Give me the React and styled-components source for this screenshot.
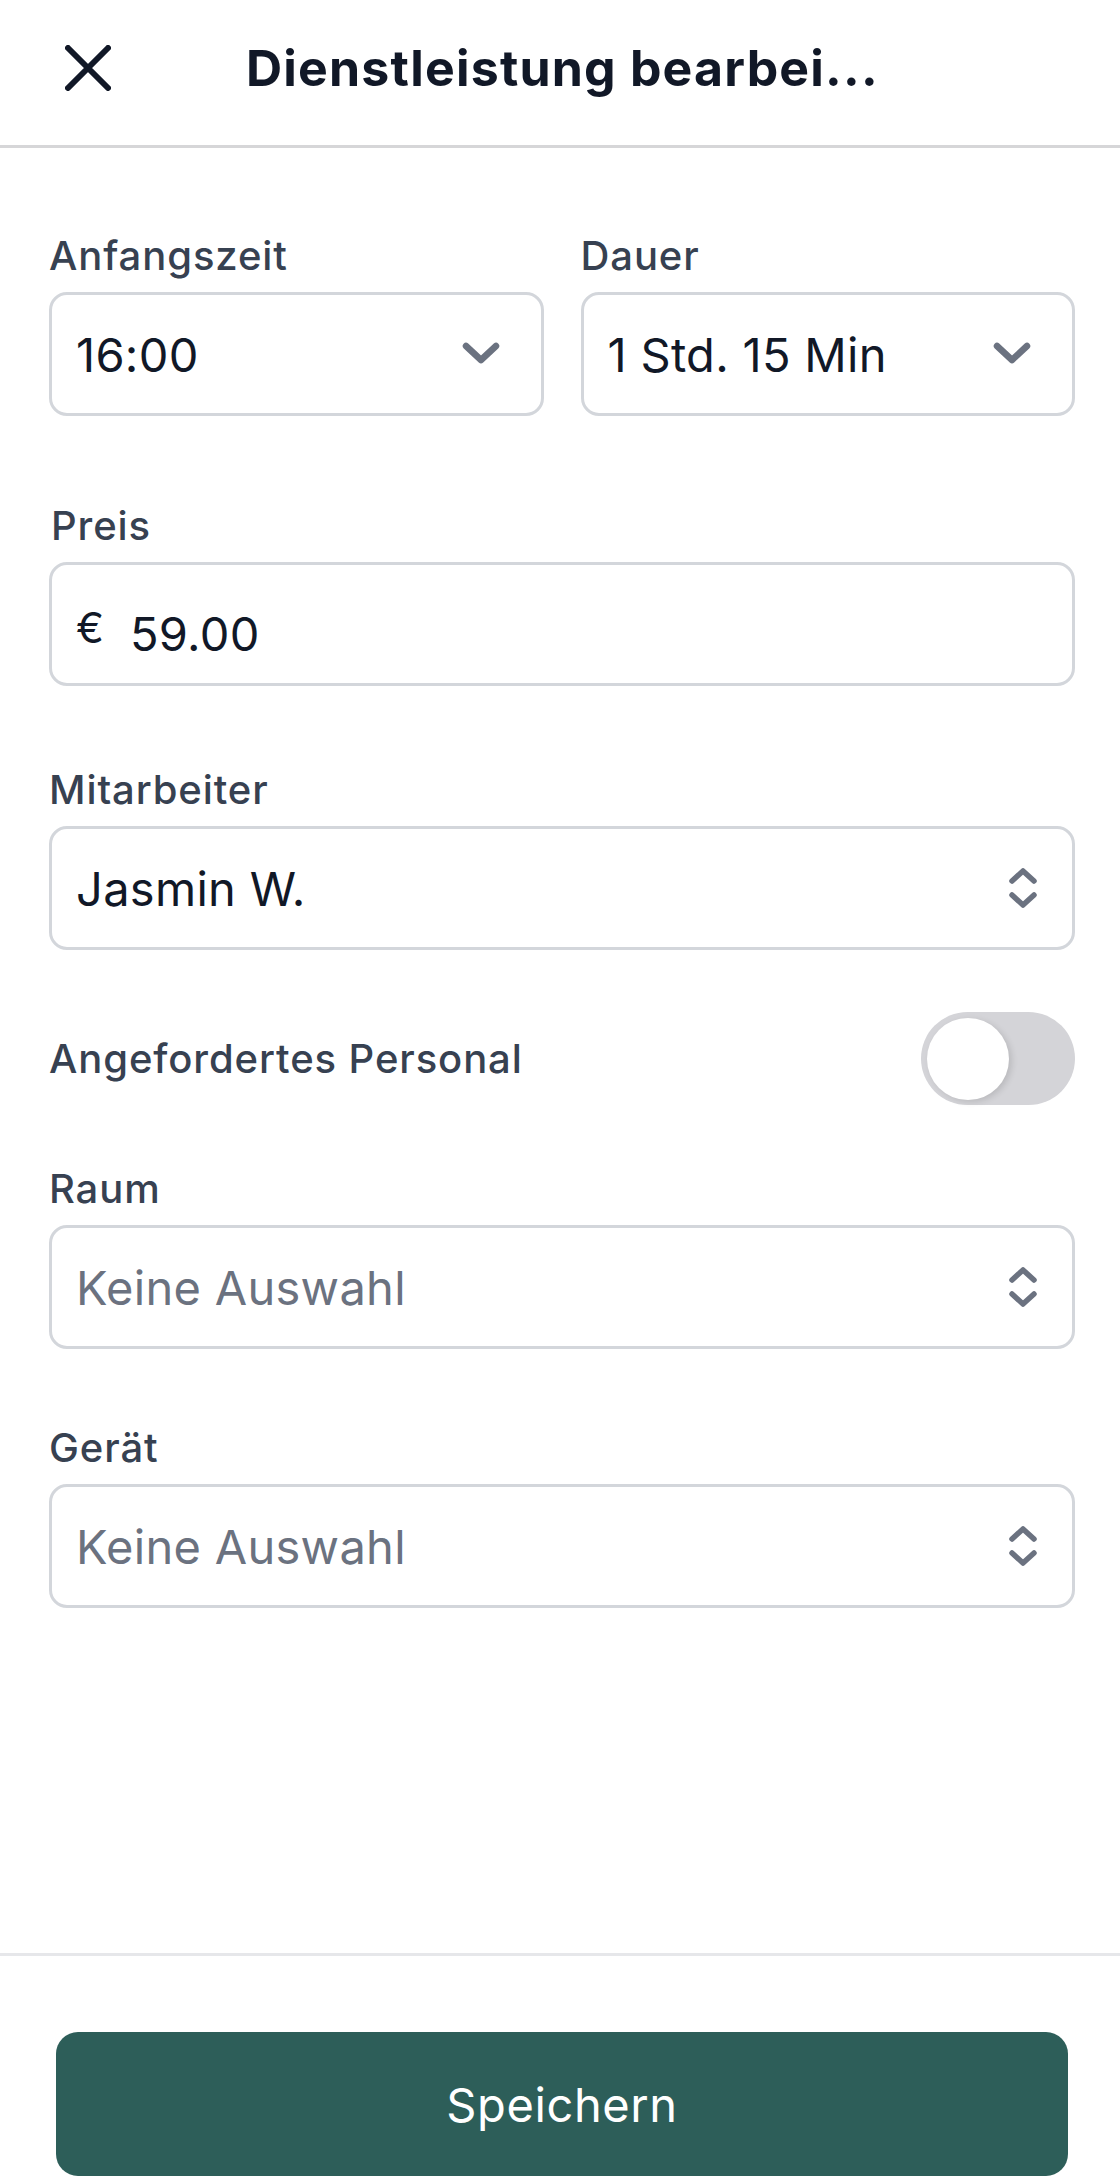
import React from 'react'
import styled, { createGlobalStyle } from 'styled-components'

const GlobalStyle = createGlobalStyle`
    * {
        box-sizing: border-box;
    }

    body {
        margin: 0;
        background: #ffffff;
        font-family: Inter, "Noto Sans", "Liberation Sans", sans-serif;
        color: #111827;
    }
`

const Screen = styled.div`
    min-height: 100vh;
    display: flex;
    flex-direction: column;
    background: #ffffff;
`

const Header = styled.header`
    height: 148px;
    display: grid;
    grid-template-columns: 246px auto 1fr;
    align-items: center;
    border-bottom: 3px solid #d6d6d8;
    padding-bottom: 10px;
`

const CloseButton = styled.button`
    background: none;
    border: none;
    padding: 0 0 0 65px;
    width: 120px;
    height: 60px;
    display: flex;
    align-items: center;
    cursor: pointer;
    color: #111827;
`

const Title = styled.h1`
    margin: 0;
    font-size: 50px;
    font-weight: 700;
    letter-spacing: 1.2px;
    white-space: nowrap;
    color: #111827;
`

const Content = styled.main`
    flex: 1;
    padding: 82px 45px 0 49px;
    display: flex;
    flex-direction: column;
`

const Row = styled.div`
    display: grid;
    grid-template-columns: 1fr 1fr;
    column-gap: 37px;
`

const Field = styled.div`
    display: flex;
    flex-direction: column;
    margin-top: ${p => p.$gap || 0}px;
`

const Label = styled.label`
    font-size: 40px;
    line-height: 52px;
    font-weight: 500;
    letter-spacing: 0.9px;
    color: #374151;
    margin-bottom: 10px;
    padding-left: ${p => p.$indent || 0}px;
`

const Box = styled.div`
    height: 124px;
    border: 3px solid #d3d6db;
    border-radius: 18px;
    display: flex;
    align-items: center;
    justify-content: space-between;
    padding: 0 ${p => p.$right || 40}px 0 24px;
    background: #ffffff;
`

const Value = styled.span`
    font-size: 47px;
    font-weight: 400;
    letter-spacing: 0.3px;
    color: ${p => (p.$placeholder ? '#6b7280' : '#111827')};
    white-space: nowrap;
    margin-top: ${p => p.$drop || 0}px;
`

const Prefixed = styled.div`
    display: flex;
    align-items: center;
`

const Currency = styled.span`
    font-size: 42px;
    color: #111827;
    margin: 6px 26px 0 0;
`

const ToggleRow = styled.div`
    margin-top: 62px;
    display: flex;
    align-items: center;
    justify-content: space-between;
`

const ToggleLabel = styled.span`
    font-size: 40px;
    font-weight: 500;
    letter-spacing: 0.9px;
    color: #374151;
`

const Track = styled.div`
    width: 154px;
    height: 93px;
    border-radius: 47px;
    background: ${p => (p.$on ? '#2d5e59' : '#d4d4d8')};
    display: flex;
    align-items: center;
    justify-content: ${p => (p.$on ? 'flex-end' : 'flex-start')};
    padding: 0 6px;
`

const Knob = styled.div`
    width: 82px;
    height: 82px;
    border-radius: 50%;
    background: #ffffff;
    box-shadow: 3px 2px 6px rgba(0, 0, 0, 0.12);
`

const Footer = styled.footer`
    border-top: 3px solid #e6e7ea;
    padding: 76px 52px 6px 56px;
`

const SaveButton = styled.button`
    width: 100%;
    height: 144px;
    border: none;
    border-radius: 22px;
    background: #2d5e59;
    color: #ffffff;
    font-family: inherit;
    font-size: 47px;
    font-weight: 400;
    letter-spacing: 0.6px;
    cursor: pointer;
`

function CloseIcon() {
    return (
        <svg width="46" height="46" viewBox="0 0 46 46" fill="none">
            <path d="M3 3 L43 43 M43 3 L3 43" stroke="currentColor" strokeWidth="6" strokeLinecap="round" />
        </svg>
    )
}

function ChevronDown() {
    return (
        <svg width="40" height="26" viewBox="0 0 40 26" fill="none">
            <path d="M5 5 L20 19 L35 5" stroke="#6b7280" strokeWidth="6.5" strokeLinecap="round" strokeLinejoin="round" />
        </svg>
    )
}

function ChevronUpDown() {
    return (
        <svg width="30" height="46" viewBox="0 0 30 46" fill="none">
            <path d="M4 16 L15 6 L26 16" stroke="#6b7280" strokeWidth="5.5" strokeLinecap="round" strokeLinejoin="round" />
            <path d="M4 30 L15 40 L26 30" stroke="#6b7280" strokeWidth="5.5" strokeLinecap="round" strokeLinejoin="round" />
        </svg>
    )
}

function Select({ value, placeholder }) {
    return (
        <Box $right={34}>
            <Value $placeholder={!value}>{value || placeholder}</Value>
            <ChevronUpDown />
        </Box>
    )
}

export default function App() {
    return (
        <Screen>
            <GlobalStyle />
            <Header>
                <CloseButton aria-label="Schließen">
                    <CloseIcon />
                </CloseButton>
                <Title>Dienstleistung bearbei...</Title>
                <div />
            </Header>

            <Content>
                <Row>
                    <Field>
                        <Label>Anfangszeit</Label>
                        <Box>
                            <Value>16:00</Value>
                            <ChevronDown />
                        </Box>
                    </Field>
                    <Field>
                        <Label>Dauer</Label>
                        <Box>
                            <Value>1 Std. 15 Min</Value>
                            <ChevronDown />
                        </Box>
                    </Field>
                </Row>

                <Field $gap={84}>
                    <Label $indent={2}>Preis</Label>
                    <Box>
                        <Prefixed>
                            <Currency>€</Currency>
                            <Value $drop={18}>59.00</Value>
                        </Prefixed>
                    </Box>
                </Field>

                <Field $gap={78}>
                    <Label>Mitarbeiter</Label>
                    <Select value="Jasmin W." />
                </Field>

                <ToggleRow>
                    <ToggleLabel>Angefordertes Personal</ToggleLabel>
                    <Track>
                        <Knob />
                    </Track>
                </ToggleRow>

                <Field $gap={58}>
                    <Label>Raum</Label>
                    <Select placeholder="Keine Auswahl" />
                </Field>

                <Field $gap={73}>
                    <Label>Gerät</Label>
                    <Select placeholder="Keine Auswahl" />
                </Field>
            </Content>

            <Footer>
                <SaveButton>Speichern</SaveButton>
            </Footer>
        </Screen>
    )
}
